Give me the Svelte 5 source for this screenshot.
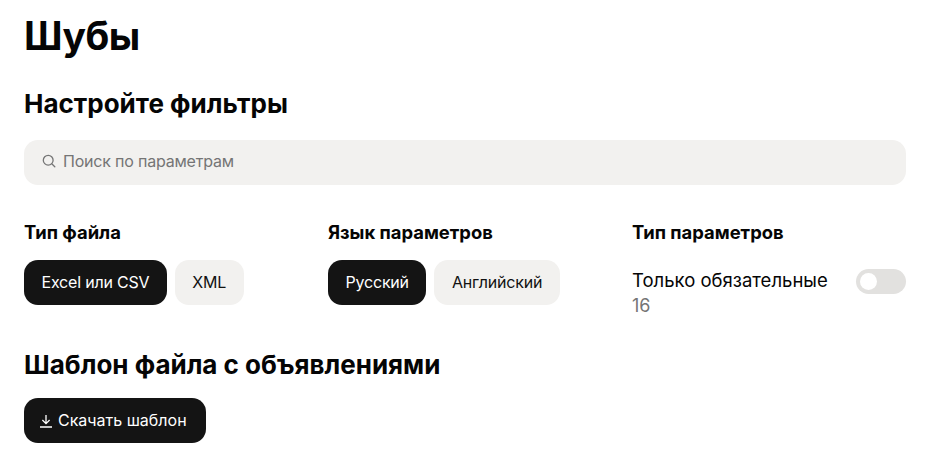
<script>
    let search = $state('');
    let fileType = $state('excel');
    let lang = $state('ru');
    let required = $state(false);
</script>

<div class="page">
    <h1>Шубы</h1>
    <h2>Настройте фильтры</h2>

    <label class="search">
        <svg width="14" height="14" viewBox="0 0 14 14" fill="none" stroke="#757575" stroke-width="1.3" stroke-linecap="round">
            <circle cx="6.2" cy="6.2" r="4.9" />
            <path d="M10 10l2.8 2.8" />
        </svg>
        <input bind:value={search} placeholder="Поиск по параметрам" />
    </label>

    <div class="filters">
        <div>
            <h3>Тип файла</h3>
            <div class="pills">
                <button class="pill" class:active={fileType === 'excel'} onclick={() => (fileType = 'excel')}>Excel или CSV</button>
                <button class="pill" class:active={fileType === 'xml'} onclick={() => (fileType = 'xml')}>XML</button>
            </div>
        </div>
        <div>
            <h3>Язык параметров</h3>
            <div class="pills">
                <button class="pill" class:active={lang === 'ru'} onclick={() => (lang = 'ru')}>Русский</button>
                <button class="pill" class:active={lang === 'en'} onclick={() => (lang = 'en')}>Английский</button>
            </div>
        </div>
        <div>
            <h3>Тип параметров</h3>
            <div class="toggle-row">
                <div>
                    <div class="toggle-label">Только обязательные</div>
                    <div class="count">16</div>
                </div>
                <button class="toggle" class:on={required} aria-label="Только обязательные" onclick={() => (required = !required)}>
                    <span class="knob"></span>
                </button>
            </div>
        </div>
    </div>

    <h2 class="template">Шаблон файла с объявлениями</h2>
    <button class="pill active download">
        <svg width="14" height="14" viewBox="0 0 14 14" fill="none" stroke="#fff" stroke-width="1.3">
            <path d="M7 1v8.2M3.4 6L7 9.6 10.6 6M1 13h12" />
        </svg>
        Скачать шаблон
    </button>
</div>

<style>
    :global(body) {
        background: #fff;
    }

    .page {
        padding: 13px 46px 0 24px;
        font-family: Inter, "Noto Sans", sans-serif;
        color: #050505;
    }

    h1 {
        margin: 0;
        font-size: 39px;
        line-height: 46px;
        font-weight: 700;
        letter-spacing: -0.5px;
    }

    h2 {
        margin: 29px 0 0;
        font-size: 26px;
        line-height: 32px;
        font-weight: 700;
    }

    h3 {
        margin: 0;
        font-size: 18.4px;
        line-height: 22px;
        font-weight: 700;
    }

    .search {
        display: flex;
        align-items: center;
        gap: 7px;
        box-sizing: border-box;
        height: 45px;
        margin-top: 20px;
        padding: 0 18px 3px;
        background: #f2f1ef;
        border-radius: 14px;
    }

    input {
        flex: 1;
        border: 0;
        outline: 0;
        padding: 0;
        background: transparent;
        font: inherit;
        font-size: 16px;
        letter-spacing: -0.2px;
        color: #111;
    }

    input::placeholder {
        color: #757575;
        opacity: 1;
    }

    .filters {
        display: grid;
        grid-template-columns: repeat(3, 274px);
        gap: 30px;
        margin-top: 36px;
    }

    .pills {
        display: flex;
        gap: 8px;
        margin-top: 17px;
    }

    .pill {
        height: 45px;
        padding: 0 17.5px 2px;
        border: 0;
        border-radius: 14px;
        background: #f2f1ef;
        color: #111;
        font: inherit;
        font-size: 16px;
        letter-spacing: -0.2px;
        cursor: pointer;
    }

    .pill.active {
        background: #141414;
        color: #fff;
    }

    .toggle-row {
        display: flex;
        justify-content: space-between;
        margin-top: 17px;
        padding-top: 8px;
    }

    .toggle-label {
        font-size: 18.5px;
        line-height: 24px;
    }

    .count {
        margin-top: 1px;
        font-size: 18px;
        line-height: 25px;
        color: #757575;
    }

    .toggle {
        display: flex;
        width: 50px;
        height: 25px;
        margin-top: 1px;
        padding: 4px;
        border: 0;
        border-radius: 13px;
        background: #e2e1df;
        cursor: pointer;
    }

    .toggle.on {
        background: #141414;
        justify-content: flex-end;
    }

    .knob {
        width: 17px;
        height: 17px;
        border-radius: 50%;
        background: #fff;
    }

    .template {
        margin-top: 31px;
    }

    .download {
        display: flex;
        align-items: center;
        gap: 5px;
        margin-top: 17px;
        padding: 0 19.5px 2px 15px;
        letter-spacing: 0;
    }

    .download svg {
        margin-top: 2px;
    }
</style>
